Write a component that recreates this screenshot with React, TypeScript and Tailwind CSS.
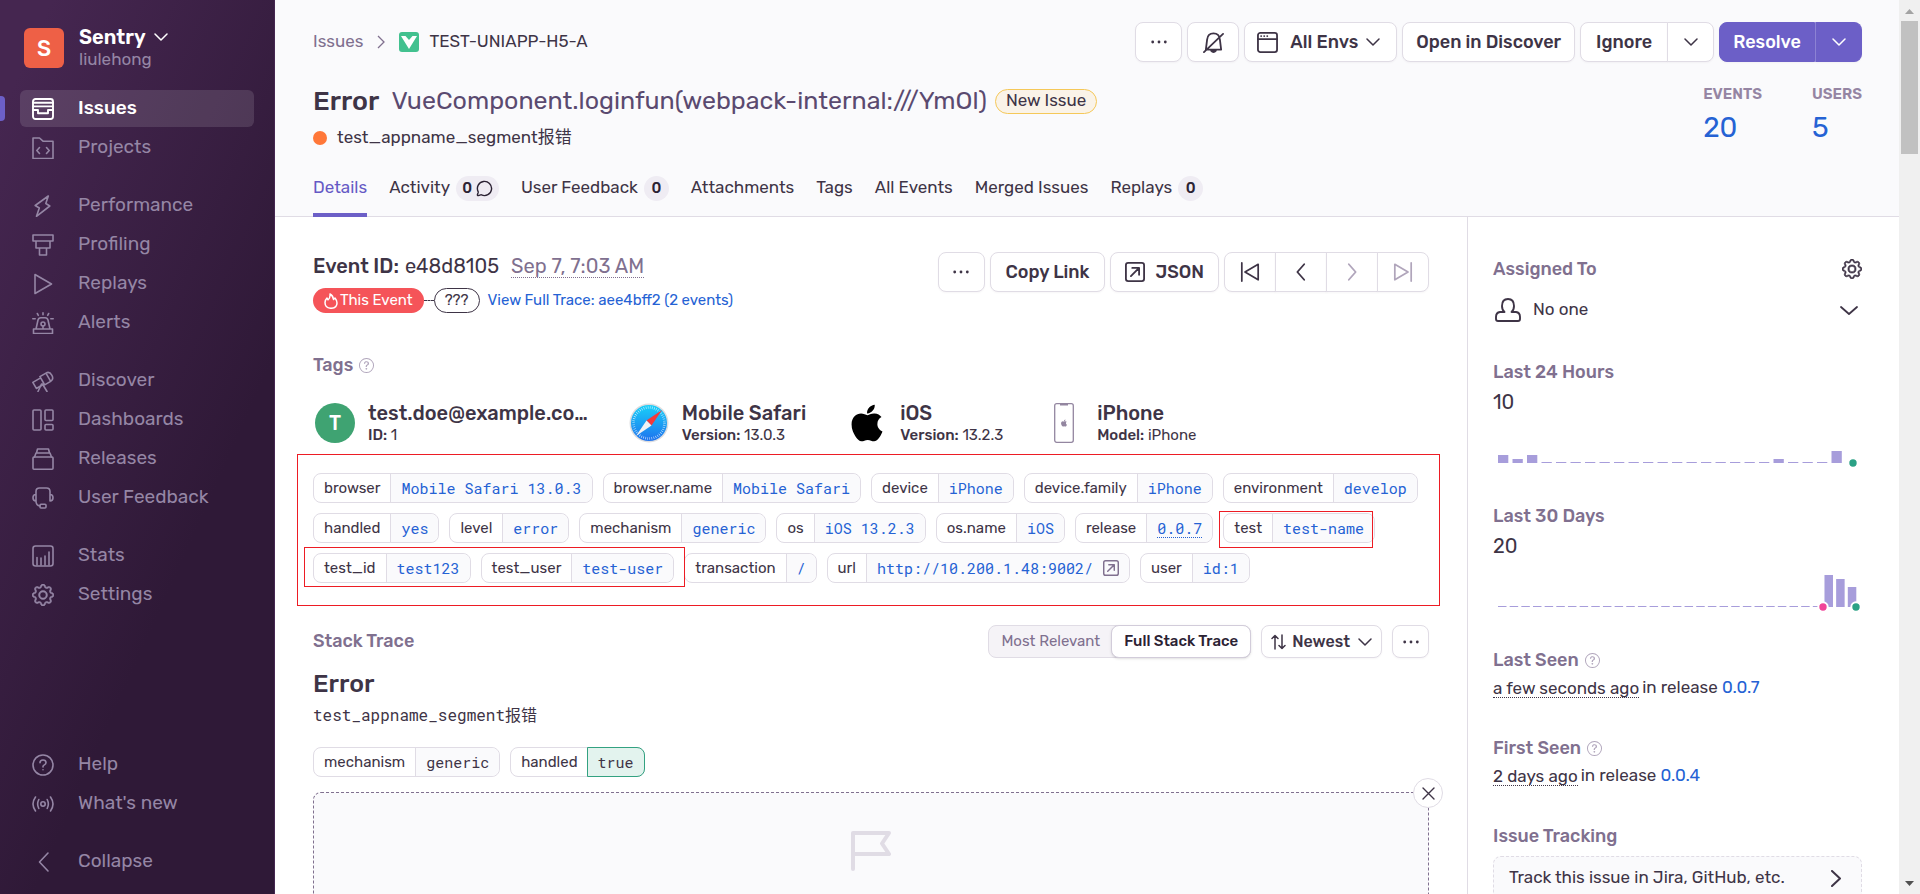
import React from 'react';
import clsx from 'clsx';
import { MessageCircle } from 'lucide-react';
import { BsGear, BsQuestionCircle } from 'react-icons/bs';
import { FaApple } from 'react-icons/fa';

type IconProps = { className?: string; children: React.ReactNode; size?: number; stroke?: number };

const Icon = ({ className, children, size = 22, stroke = 1.6 }: IconProps) => (
    <svg className={clsx('shrink-0', className)} width={size} height={size} viewBox="0 0 22 22" fill="none" stroke="currentColor" strokeWidth={stroke} strokeLinecap="round" strokeLinejoin="round" aria-hidden="true">
        {children}
    </svg>
);

const Chevron = ({ className }: { className?: string }) => (
    <svg className={clsx('h-2 w-3.5 shrink-0', className)} viewBox="0 0 14 8" fill="none" stroke="currentColor" strokeWidth={1.5} strokeLinecap="round" strokeLinejoin="round" aria-hidden="true">
        <path d="M1 1l6 6 6-6" />
    </svg>
);

const Dots = () => (
    <svg width="16" height="4" viewBox="0 0 16 4" fill="currentColor" aria-hidden="true">
        <circle cx="1.7" cy="2" r="1.4" />
        <circle cx="8" cy="2" r="1.4" />
        <circle cx="14.3" cy="2" r="1.4" />
    </svg>
);

const OpenIcon = ({ size = 20, className }: { size?: number; className?: string }) => (
    <Icon size={size} className={className} stroke={2}>
        <rect x="1" y="1" width="20" height="20" rx="2.5" />
        <path d="M6.5 15.5l9-9M8 6.5h7.5V14" />
    </Icon>
);

const navIcons: Record<string, React.ReactNode> = {
    Issues: (
        <Icon stroke={1.9}>
            <rect x="1" y="1" width="20" height="20" rx="2.5" />
            <path d="M1 4.8h20M1 8.4h20M1 12h5v3.2h10V12h5" />
        </Icon>
    ),
    Projects: (
        <Icon>
            <path d="M1 1h6.5l3.5 3.2h10V21.5H1z" />
            <path d="M7.5 10.5L4.8 13.5l2.7 3M14.5 10.5l2.7 3-2.7 3" />
        </Icon>
    ),
    Performance: (
        <Icon>
            <path d="M16.3 1L3.2 10.5 7.3 13 4.5 21.3 17.8 11 13.8 8.5z" />
        </Icon>
    ),
    Profiling: (
        <Icon>
            <path d="M1 1h20v6H1zM4 7h14v7H4zM7.5 14h7v7h-7z" />
        </Icon>
    ),
    Replays: (
        <Icon>
            <path d="M3 1.5L19.5 11 3 20.5z" />
        </Icon>
    ),
    Alerts: (
        <Icon>
            <path d="M1.5 17h19v4.5h-19zM4 17L6 8q.6-2.3 2.8-2.3h4.4Q15.4 5.7 16 8l2 9M11 14v3" />
            <circle cx="11" cy="12" r="2" />
            <path d="M11 .8v2M5.3 1.5l1 1.8M16.7 1.5l-1 1.8M.8 6.8h2.4M18.8 6.8h2.4" />
        </Icon>
    ),
    Discover: (
        <Icon>
            <g transform="rotate(-30 11 10)">
                <path d="M1 7h9v7H1zM10 5.5h7V15h-7zM17 5.5q4 0 4 4.7T17 15" />
            </g>
            <path d="M9.5 14L6 21.5M10.5 14l4.5 7.5" />
        </Icon>
    ),
    Dashboards: (
        <Icon>
            <rect x="1" y="1" width="8" height="20" rx="1" />
            <rect x="13" y="1" width="8" height="10.5" rx="1" />
            <rect x="13" y="15.5" width="8" height="5.5" rx="1" />
        </Icon>
    ),
    Releases: (
        <Icon>
            <rect x="1" y="9" width="20" height="12.2" rx="1" />
            <path d="M2.5 9L4 5h14l1.5 4M4.5 5L5.5 1h11l1 4" />
        </Icon>
    ),
    'User Feedback': (
        <Icon>
            <path d="M4 14V4.5Q4 1 7.5 1h7Q18 1 18 4.5V14M4 7.5Q1 7.5 1 10.7T4 14M18 7.5q3 0 3 3.2T18 14M4 14q0 4.5 4 5" />
            <rect x="8" y="17.3" width="6" height="3.7" rx="1" />
        </Icon>
    ),
    Stats: (
        <Icon>
            <rect x="1" y="1" width="20" height="20" rx="2.5" />
            <path d="M5 12.5V20M9 13v7M13 11v9M17 7v13" />
        </Icon>
    ),
    Settings: <BsGear className="size-[22px] shrink-0" strokeWidth={0.4} aria-hidden="true" />,
    Help: (
        <Icon>
            <circle cx="11" cy="11" r="10" />
            <path d="M8 8.8Q8 6 11 6t3 2.6q0 1.5-1.6 2.3T11 13M11 15.7v.1" />
        </Icon>
    ),
    "What's new": (
        <Icon>
            <circle cx="11" cy="11" r="2.2" />
            <path d="M6.8 6.5q-2.3 4.5 0 9M15.2 6.5q2.3 4.5 0 9M3.5 4q-5 7 0 14M18.5 4q5 7 0 14" />
        </Icon>
    ),
    Collapse: (
        <Icon>
            <path d="M16 2L7.5 11l8.5 9" />
        </Icon>
    ),
};

const navGroups = [
    ['Issues', 'Projects'],
    ['Performance', 'Profiling', 'Replays', 'Alerts'],
    ['Discover', 'Dashboards', 'Releases', 'User Feedback'],
    ['Stats', 'Settings'],
];

const bottomGroups = [['Help', "What's new"], ['Collapse']];

const NavGroup = ({ items }: { items: string[] }) => (
    <ul className="flex flex-col gap-0.5">
        {items.map((item) => (
            <li key={item} className="relative px-5">
                {item === 'Issues' && <span className="absolute top-1.5 left-0 h-[25px] w-[5px] rounded-r bg-[#6c5fc7]" />}
                <a
                    href="#"
                    className={clsx(
                        'flex h-[37px] items-center gap-6 rounded-md pl-3 text-[19px]',
                        item === 'Issues' ? 'bg-white/12 font-medium text-white' : 'text-[#9586a5]'
                    )}
                >
                    {navIcons[item]}
                    {item}
                </a>
            </li>
        ))}
    </ul>
);

const Sidebar = () => (
    <nav className="flex w-[275px] shrink-0 flex-col justify-between border-r border-[#452650] bg-[linear-gradient(294.17deg,#2f1937_35.57%,#452650_92.42%)] pt-[26px] pb-3.5">
        <div>
            <div className="flex items-center gap-[15px] px-6 pb-5">
                <span className="flex size-10 items-center justify-center rounded-md bg-[#ee6046] text-[22px] font-medium text-white">S</span>
                <div>
                    <button className="flex items-center gap-2 text-[20px] leading-[22px] font-semibold text-white">
                        Sentry
                        <Chevron />
                    </button>
                    <p className="text-[17px] leading-[22px] text-[#9586a5]">liulehong</p>
                </div>
            </div>
            <div className="flex flex-col gap-[21px]">
                {navGroups.map((g) => <NavGroup key={g[0]} items={g} />)}
            </div>
        </div>
        <div className="flex flex-col gap-[21px]">
            {bottomGroups.map((g) => <NavGroup key={g[0]} items={g} />)}
        </div>
    </nav>
);

const Button = ({ className, children, label }: { className?: string; children: React.ReactNode; label?: string }) => (
    <button aria-label={label} className={clsx('flex h-10 items-center justify-center rounded-lg border border-[#e0dce5] bg-white text-[18px] font-medium whitespace-nowrap shadow-[0_1px_2px_rgba(43,34,51,0.04)]', className)}>
        {children}
    </button>
);

const Count = ({ children }: { children: React.ReactNode }) => (
    <span className="flex h-[25px] min-w-[25px] items-center justify-center gap-1 rounded-full bg-[#efecf3] px-1.5 text-[15px] font-medium text-[#2b2233]">{children}</span>
);

const tabs: { name: string; count?: React.ReactNode }[] = [
    { name: 'Details' },
    { name: 'Activity', count: <>0<MessageCircle className="size-[17px]" strokeWidth={2} /></> },
    { name: 'User Feedback', count: '0' },
    { name: 'Attachments' },
    { name: 'Tags' },
    { name: 'All Events' },
    { name: 'Merged Issues' },
    { name: 'Replays', count: '0' },
];

const Header = () => (
    <header className="border-b border-[#e0dce5] bg-[#fafafc] pt-[22px] pr-[37px] pl-[38px]">
        <div className="flex h-10 items-center justify-between">
            <div className="flex items-center text-[17px]">
                <a href="#" className="text-[#80708f]">Issues</a>
                <svg className="mx-3.5 h-3.5 w-2 text-[#80708f]" viewBox="0 0 8 14" fill="none" stroke="currentColor" strokeWidth="1.3" aria-hidden="true"><path d="M1 1l6 6-6 6" /></svg>
                <svg className="mr-2.5 size-5" viewBox="0 0 20 20" aria-hidden="true">
                    <rect width="20" height="20" rx="3" fill="#42c18f" />
                    <path d="M2 4h4.5L10 8l3.5-4H18l-8 13z" fill="#fff" />
                </svg>
                TEST-UNIAPP-H5-A
            </div>
            <div className="flex gap-[5px]">
                <Button className="w-[47px]" label="More actions"><Dots /></Button>
                <Button className="w-[52px]" label="Subscribe">
                    <Icon size={21} stroke={1.9}>
                        <path d="M3 18.5L4.3 8Q5 1.5 11 1.5T17.7 8L19 18.5zM1 21L21 2" />
                        <path d="M8.5 19.5q2.5 3 5 0z" fill="currentColor" />
                    </Icon>
                </Button>
                <Button className="gap-3 pr-4 pl-3">
                    <Icon size={21} stroke={1.9}>
                        <rect x="1" y="1" width="20" height="20" rx="2.5" />
                        <path d="M1 7.5h20M4.3 4.3h.1M7.5 4.3h.1M10.7 4.3h.1" />
                    </Icon>
                    All Envs
                    <Chevron className="-ml-1" />
                </Button>
                <Button className="px-[13px]">Open in Discover</Button>
                <div className="flex">
                    <Button className="rounded-r-none px-[15px]">Ignore</Button>
                    <Button className="-ml-px w-[47px] rounded-l-none" label="Ignore options"><Chevron /></Button>
                </div>
                <div className="flex">
                    <Button className="rounded-r-none !border-[#6c5fc7] !bg-[#6c5fc7] px-[13px] text-white">Resolve</Button>
                    <Button className="w-[47px] rounded-l-none !border-[#6c5fc7] !border-l-[#8c82d4] !bg-[#6c5fc7] text-white" label="Resolve options"><Chevron /></Button>
                </div>
            </div>
        </div>
        <div className="flex justify-between pt-5">
            <div>
                <div className="flex h-[38px] items-center">
                    <h1 className="text-[27px] font-medium">Error</h1>
                    <span className="ml-3 text-[25px] text-[#5a4a70]">VueComponent.loginfun(webpack-internal:///YmOl)</span>
                    <span className="ml-2 flex h-[25px] items-center rounded-full border border-[#f5c859] bg-[#faf3e8] px-2.5 text-[17px]">New Issue</span>
                </div>
                <div className="mt-1 flex h-7 items-center gap-2.5 text-[17px]">
                    <span className="size-3.5 rounded-full bg-[#ff7738]" />
                    test_appname_segment报错
                </div>
            </div>
            <dl className="flex gap-[50px]">
                <div>
                    <dt className="text-[15px] leading-6 font-semibold text-[#9585a3]">EVENTS</dt>
                    <dd className="mt-1 text-[28px] leading-9 text-[#2562d4]"><a href="#">20</a></dd>
                </div>
                <div>
                    <dt className="text-[15px] leading-6 font-semibold text-[#9585a3]">USERS</dt>
                    <dd className="mt-1 text-[28px] leading-9 text-[#2562d4]"><a href="#">5</a></dd>
                </div>
            </dl>
        </div>
        <div className="mt-[11px] -mb-px flex gap-[22px] text-[17px]">
            {tabs.map(({ name, count }) => (
                <a key={name} href="#" className={clsx('flex h-[54px] items-center gap-1.5 border-b-4 whitespace-nowrap', name === 'Details' ? 'border-[#6c5fc7] text-[#6559c5]' : 'border-transparent')}>
                    {name}
                    {count && <Count>{count}</Count>}
                </a>
            ))}
        </div>
    </header>
);

const Help = () => <BsQuestionCircle className="size-[15px] text-[#b0a5bb]" aria-hidden="true" />;

const SectionTitle = ({ children }: { children: React.ReactNode }) => (
    <h2 className="flex h-6 items-center gap-1.5 text-[18px] font-medium text-[#80708f]">{children}</h2>
);

const SafariIcon = () => (
    <svg width="40" height="40" viewBox="0 0 40 40" aria-hidden="true">
        <defs>
            <linearGradient id="safari" x1="0" y1="0" x2="0" y2="1">
                <stop offset="0" stopColor="#19d0f9" />
                <stop offset="1" stopColor="#1e72ee" />
            </linearGradient>
        </defs>
        <circle cx="20" cy="20" r="19.5" fill="#dcdde0" />
        <circle cx="20" cy="20" r="18" fill="url(#safari)" />
        <circle cx="20" cy="20" r="15.5" fill="none" stroke="#fff" strokeWidth="2.5" strokeDasharray="0.6 1.5" opacity="0.8" />
        <path d="M33 7L17.5 17.5 22.5 22.5z" fill="#f5383a" />
        <path d="M7 33L17.5 17.5 22.5 22.5z" fill="#f1f2f4" />
    </svg>
);

const contexts = [
    {
        icon: <span className="flex size-10 items-center justify-center rounded-full bg-[#3fa372] text-[20px] font-medium text-white">T</span>,
        title: 'test.doe@example.co…', label: 'ID:', value: '1',
    },
    { icon: <SafariIcon />, title: 'Mobile Safari', label: 'Version:', value: '13.0.3' },
    { icon: <FaApple className="size-[42px] text-black" aria-hidden="true" />, title: 'iOS', label: 'Version:', value: '13.2.3' },
    {
        icon: (
            <svg width="20" height="40" viewBox="0 0 20 40" fill="none" aria-hidden="true">
                <rect x="0.7" y="0.7" width="18.6" height="38.6" rx="2" stroke="#9386a0" strokeWidth="1.3" />
                <path d="M6 1h8v1.5H6z" fill="#9386a0" />
                <FaApple x="6" y="16" size={8} color="#9386a0" />
            </svg>
        ),
        title: 'iPhone', label: 'Model:', value: 'iPhone',
    },
];

const tagRows = [
    ['browser', 'Mobile Safari 13.0.3'],
    ['browser.name', 'Mobile Safari'],
    ['device', 'iPhone'],
    ['device.family', 'iPhone'],
    ['environment', 'develop'],
    ['handled', 'yes'],
    ['level', 'error'],
    ['mechanism', 'generic'],
    ['os', 'iOS 13.2.3'],
    ['os.name', 'iOS'],
    ['release', '0.0.7'],
    ['test', 'test-name'],
    ['test_id', 'test123'],
    ['test_user', 'test-user'],
    ['transaction', '/'],
    ['url', 'http://10.200.1.48:9002/'],
    ['user', 'id:1'],
];

const mono = "font-['Roboto_Mono','Liberation_Mono','Noto_Sans_CJK_SC',monospace]";

const Pill = ({ name, children, valueClass }: { name: string; children: React.ReactNode; valueClass?: string }) => (
    <li className="flex h-[30px] rounded-lg border border-[#e0dce5] bg-white text-[15px]">
        <span className="flex items-center px-2.5">{name}</span>
        <span className={clsx('flex items-center gap-2.5 rounded-r-lg border-[#e0dce5] px-2.5', mono, valueClass)}>{children}</span>
    </li>
);

const EventHeader = () => (
    <div className="flex items-start justify-between">
        <div>
            <div className="flex h-7 items-center text-[20px]">
                <span className="font-medium">Event ID:</span>
                <span className="ml-1.5">e48d8105</span>
                <time className="ml-3 border-b border-dotted border-[#80708f] leading-[22px] text-[#80708f]">Sep 7, 7:03 AM</time>
            </div>
            <div className="mt-2 flex h-[25px] items-center text-[15px]">
                <span className="flex h-full items-center gap-0.5 rounded-full bg-[#f55459] px-[11px] text-white">
                    <svg className="h-4 w-3.5" viewBox="0 0 14 16" fill="none" stroke="currentColor" strokeWidth="1.5" strokeLinejoin="round" aria-hidden="true">
                        <path d="M1 9.5Q1 7 3 5l1 1.8Q6.5 5 6 1q3 1.5 3.5 5.5L11 5q2 2.5 2 5 0 5-6 5.3Q1 15 1 9.5z" />
                    </svg>
                    This Event
                </span>
                <span className="w-2.5 border-t border-dashed border-[#3e3446]" />
                <span className="flex h-full items-center rounded-full border border-[#3e3446] px-2.5">???</span>
                <a href="#" className="ml-2 text-[#2562d4]">View Full Trace: aee4bff2 (2 events)</a>
            </div>
        </div>
        <div className="flex gap-[5px]">
            <Button className="w-[47px]" label="Event actions"><Dots /></Button>
            <Button className="px-[15px]">Copy Link</Button>
            <Button className="gap-2.5 px-[14px]"><OpenIcon />JSON</Button>
            <div className="flex">
                <Button className="w-[52px] rounded-r-none" label="Oldest"><Icon size={20} stroke={1.9}><path d="M2 1v20M20 2.5L5.5 11 20 19.5z" /></Icon></Button>
                <Button className="-ml-px w-[52px] rounded-none" label="Older"><Icon size={20} stroke={2}><path d="M14.5 2.5L7 11l7.5 8.5" /></Icon></Button>
                <Button className="-ml-px w-[52px] rounded-none text-[#b0a5bb]" label="Newer"><Icon size={20} stroke={2}><path d="M7.5 2.5L15 11l-7.5 8.5" /></Icon></Button>
                <Button className="-ml-px w-[52px] rounded-l-none text-[#b0a5bb]" label="Newest"><Icon size={20} stroke={1.9}><path d="M20 1v20M2 2.5L16.5 11 2 19.5z" /></Icon></Button>
            </div>
        </div>
    </div>
);

const Tags = () => (
    <section className="mt-10">
        <SectionTitle>Tags <Help /></SectionTitle>
        <ul className="mt-6 flex gap-[41px] pl-0.5">
            {contexts.map((c) => (
                <li key={c.title} className="flex items-center gap-[13px]">
                    <span className="flex size-10 items-center justify-center">{c.icon}</span>
                    <div>
                        <h3 className="text-[20px] leading-6 font-medium">{c.title}</h3>
                        <p className="text-[15px] leading-5"><span className="font-medium">{c.label}</span> {c.value}</p>
                    </div>
                </li>
            ))}
        </ul>
        <div className="relative -mr-[11px] -ml-4 mt-[9px] border border-[#ed1c24] px-[15px] pt-[18px] pb-[22px]">
            <ul className="flex flex-wrap gap-2.5">
                {tagRows.map(([name, value]) => (
                    <Pill key={name} name={name} valueClass="border-l bg-[#fafafc] text-[#2562d4]">
                        <a href="#" className={name === 'release' ? 'border-b border-dotted border-[#2562d4] leading-[18px]' : ''}>{value}</a>
                        {name === 'url' && <OpenIcon size={16} className="text-[#80708f]" />}
                    </Pill>
                ))}
            </ul>
            <span className="pointer-events-none absolute top-14 left-[921px] h-[37px] w-[154px] border border-[#ed1c24]" />
            <span className="pointer-events-none absolute top-[92px] left-1.5 h-10 w-[381px] border border-[#ed1c24]" />
        </div>
    </section>
);

const StackTrace = () => (
    <section className="mt-[19px]">
        <div className="flex items-center justify-between">
            <SectionTitle>Stack Trace</SectionTitle>
            <div className="flex gap-2.5">
                <div className="flex h-[33px] rounded-lg border border-[#e0dce5] bg-[#f5f3f7] text-[15px]">
                    <button className="px-3 text-[#80708f]">Most Relevant</button>
                    <button className="-m-px rounded-lg border border-[#d2ccda] bg-white px-3 font-medium text-[#2b2233] shadow-sm">Full Stack Trace</button>
                </div>
                <Button className="h-[33px]! gap-1.5 px-[9px] text-[16px]!">
                    <svg width="15" height="16" viewBox="0 0 15 16" fill="none" stroke="currentColor" strokeWidth="1.5" strokeLinecap="round" strokeLinejoin="round" aria-hidden="true">
                        <path d="M4 15V1.5M1 4.5l3-3 3 3M11 1v13.5M8 11.5l3 3 3-3" />
                    </svg>
                    Newest
                    <Chevron className="ml-0.5" />
                </Button>
                <Button className="h-[33px]! w-[37px]" label="Stack trace options"><Dots /></Button>
            </div>
        </div>
        <h3 className="mt-2.5 text-[25px] leading-8 font-medium">Error</h3>
        <pre className={clsx('mt-[3px] text-[16px] leading-6', mono)}>test_appname_segment报错</pre>
        <ul className="mt-5 flex gap-2.5">
            <Pill name="mechanism" valueClass="border-l bg-[#fafafc]">generic</Pill>
            <Pill name="handled" valueClass="-m-px border !border-[#33a281] bg-[#e3f3ee]">true</Pill>
        </ul>
        <div className="relative mt-[15px] flex h-56 justify-center rounded-lg border border-dashed border-[#80708f] bg-[#fafafc] pt-[37px]">
            <svg className="h-[41px] w-10 text-[#e0dce5]" viewBox="0 0 40 41" fill="none" stroke="currentColor" strokeWidth="4" strokeLinecap="round" strokeLinejoin="round" aria-hidden="true">
                <path d="M2 39V3h36l-7 10.5L38 24H2" />
            </svg>
            <button aria-label="Close" className="absolute -top-[15px] -right-[15px] flex size-[30px] items-center justify-center rounded-full border border-[#e0dce5] bg-white">
                <svg width="13" height="13" viewBox="0 0 13 13" stroke="currentColor" strokeWidth="1.4" strokeLinecap="round" aria-hidden="true"><path d="M1 1l11 11M12 1L1 12" /></svg>
            </button>
        </div>
    </section>
);

const day = [8, 4, 8, 1, 1, 1, 1, 1, 1, 1, 1, 1, 1, 1, 1, 1, 1, 1, 1, 4, 1, 1, 1, 12];
const month = [...Array(28).fill(1), 32, 28, 20];

const Bars = ({ data, pitch, width, dots }: { data: number[]; pitch: number; width: number; dots: [number, string][] }) => (
    <svg className="w-full" viewBox="0 0 369 40" aria-hidden="true">
        {data.map((h, i) => (
            <rect key={i} x={5 + i * pitch} y={35 - h} width={width} height={h} fill="#a79ddb" />
        ))}
        {dots.map(([x, fill]) => (
            <circle key={x} cx={x} cy="35" r="4.7" fill={fill} stroke="#fff" strokeWidth="2" />
        ))}
    </svg>
);

const Seen = ({ title, when, release }: { title: string; when: string; release: string }) => (
    <section>
        <SectionTitle>{title} <Help /></SectionTitle>
        <p className="mt-1 flex h-6 items-center text-[17px]">
            <span className="mr-[3px] border-b border-dotted border-[#3e3446] leading-[18px]">{when}</span>in release&nbsp;<a href="#" className="text-[#2562d4]">{release}</a>
        </p>
    </section>
);

const Aside = () => (
    <aside className="w-[432px] shrink-0 border-l border-[#e0dce5] pt-10 pr-[37px] pl-[25px]">
        <div className="flex items-center justify-between">
            <SectionTitle>Assigned To</SectionTitle>
            <button aria-label="Ownership rules"><BsGear className="size-5" strokeWidth={0.5} /></button>
        </div>
        <button className="mt-[15px] flex h-7 w-full items-center text-[17px]">
            <svg className="ml-0.5 h-6 w-[26px]" viewBox="0 0 26 24" fill="none" stroke="currentColor" strokeWidth="1.9" strokeLinejoin="round" aria-hidden="true">
                <path d="M9.5 14Q7 12 7 8q0-7 6-7t6 7q0 4-2.5 6H21q4 .5 4 5v2q0 2-2 2H3q-2 0-2-2v-2q0-4.5 4-5z" />
            </svg>
            <span className="ml-3 grow text-left">No one</span>
            <svg className="mr-1 h-[9px] w-[18px]" viewBox="0 0 18 9" fill="none" stroke="currentColor" strokeWidth="1.8" strokeLinecap="round" strokeLinejoin="round" aria-hidden="true"><path d="M1 1l8 7 8-7" /></svg>
        </button>
        <section className="mt-9">
            <SectionTitle>Last 24 Hours</SectionTitle>
            <p className="mt-1 text-[20px] leading-7">10</p>
            <div className="mt-3"><Bars data={day} pitch={14.5} width={10.3} dots={[[360, '#2ba185']]} /></div>
        </section>
        <section className="mt-9">
            <SectionTitle>Last 30 Days</SectionTitle>
            <p className="mt-1 text-[20px] leading-7">20</p>
            <div className="mt-3"><Bars data={month} pitch={11.66} width={8.5} dots={[[330, '#f14499'], [363, '#2ba185']]} /></div>
        </section>
        <div className="mt-9 flex flex-col gap-9">
            <Seen title="Last Seen" when="a few seconds ago" release="0.0.7" />
            <Seen title="First Seen" when="2 days ago" release="0.0.4" />
            <section>
                <SectionTitle>Issue Tracking</SectionTitle>
                <a href="#" className="mt-2 flex h-11 items-center justify-between rounded-lg border border-dashed border-[#e0dce5] bg-[#fafafc] pr-5 pl-[15px] text-[17px]">
                    Track this issue in Jira, GitHub, etc.
                    <svg width="10" height="17" viewBox="0 0 10 17" fill="none" stroke="currentColor" strokeWidth="2" strokeLinecap="round" strokeLinejoin="round" aria-hidden="true"><path d="M1 1l8 7.5-8 7.5" /></svg>
                </a>
            </section>
        </div>
    </aside>
);

const Scrollbar = () => (
    <div className="flex w-[21px] shrink-0 flex-col items-center justify-between bg-[#f0f0f0] pb-2" aria-hidden="true">
        <div className="flex flex-col items-center gap-[7px] pt-[9px]">
            <svg width="9" height="5" viewBox="0 0 9 5" fill="#a3a3a3"><path d="M0 5l4.5-5L9 5z" /></svg>
            <div className="h-[133px] w-[17px] bg-[#c1c1c1]" />
        </div>
        <svg width="9" height="5" viewBox="0 0 9 5" fill="#505050"><path d="M0 0l4.5 5L9 0z" /></svg>
    </div>
);

const App = () => {
    return (
        <div className="flex h-screen overflow-hidden bg-white font-['Rubik','Inter','Noto_Sans_CJK_SC',sans-serif] text-[#3e3446]">
            <Sidebar />
            <div className="min-w-0 grow overflow-hidden">
                <Header />
                <div className="flex">
                    <main className="min-w-0 grow px-[38px] pt-[35px]">
                        <EventHeader />
                        <Tags />
                        <StackTrace />
                    </main>
                    <Aside />
                </div>
            </div>
            <Scrollbar />
        </div>
    );
};

export default App;
